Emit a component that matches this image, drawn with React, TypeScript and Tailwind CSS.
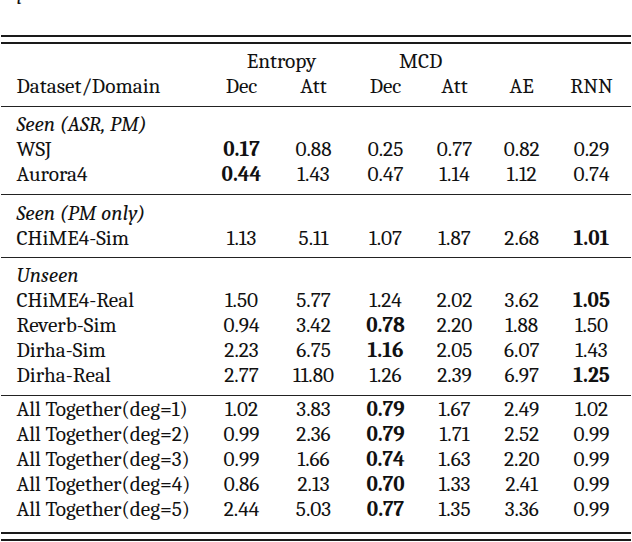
type Row = { name: string; vals: string[] };

const groups: { label?: string; rows: Row[] }[] = [
    {
        label: 'Seen (ASR, PM)',
        rows: [
            { name: 'WSJ', vals: ['*0.17', '0.88', '0.25', '0.77', '0.82', '0.29'] },
            { name: 'Aurora4', vals: ['*0.44', '1.43', '0.47', '1.14', '1.12', '0.74'] },
        ],
    },
    {
        label: 'Seen (PM only)',
        rows: [{ name: 'CHiME4-Sim', vals: ['1.13', '5.11', '1.07', '1.87', '2.68', '*1.01'] }],
    },
    {
        label: 'Unseen',
        rows: [
            { name: 'CHiME4-Real', vals: ['1.50', '5.77', '1.24', '2.02', '3.62', '*1.05'] },
            { name: 'Reverb-Sim', vals: ['0.94', '3.42', '*0.78', '2.20', '1.88', '1.50'] },
            { name: 'Dirha-Sim', vals: ['2.23', '6.75', '*1.16', '2.05', '6.07', '1.43'] },
            { name: 'Dirha-Real', vals: ['2.77', '11.80', '1.26', '2.39', '6.97', '*1.25'] },
        ],
    },
    {
        rows: [
            { name: 'All Together(deg=1)', vals: ['1.02', '3.83', '*0.79', '1.67', '2.49', '1.02'] },
            { name: 'All Together(deg=2)', vals: ['0.99', '2.36', '*0.79', '1.71', '2.52', '0.99'] },
            { name: 'All Together(deg=3)', vals: ['0.99', '1.66', '*0.74', '1.63', '2.20', '0.99'] },
            { name: 'All Together(deg=4)', vals: ['0.86', '2.13', '*0.70', '1.33', '2.41', '0.99'] },
            { name: 'All Together(deg=5)', vals: ['2.44', '5.03', '*0.77', '1.35', '3.36', '0.99'] },
        ],
    },
];

const groupGaps = ['mt-[4.5px]', 'mt-[5.5px]', 'mt-[4.8px]', 'mt-[0.8px]'];
const ruleGaps = ['mt-[7px]', 'mt-[6px]', 'mt-[6.7px]'];

function Line({ className }: { className: string }) {
    return <div className={`ml-px w-[630px] ${className}`} />;
}

function DataRow({ row }: { row: Row }) {
    return (
        <div className="grid grid-cols-[189px_72px_72px_72px_66px_68.5px_71px] pl-[16.5px] h-[25px] leading-[25px] whitespace-nowrap">
            <span>{row.name}</span>
            {row.vals.map((v, i) => (
                <span key={i} className={v.startsWith('*') ? 'text-center font-bold' : 'text-center'}>
                    {v.replace('*', '')}
                </span>
            ))}
        </div>
    );
}

export default function App() {
    return (
        <div className="w-[632px] h-[542px] overflow-hidden bg-white flex flex-col font-serif text-[21.3px] text-[#111]">
            {/* tail of the caption line above, cut off by the crop */}
            <div className="-mt-[20px] h-[25px] leading-[25px] pl-[17px] italic">p</div>

            <Line className="mt-[30px] h-[2px] bg-[#1a1a1a]" />
            <Line className="mt-[5px] h-[2px] bg-[#1a1a1a]" />

            <div className="grid grid-cols-[189px_72px_72px_72px_66px_68.5px_71px] pl-[16.5px] h-[25px] leading-[25px] mt-[5.3px]">
                <span />
                <span className="col-span-2 text-center pl-[8px]">Entropy</span>
                <span className="col-span-2 text-center pl-[4.5px]">MCD</span>
            </div>
            <div className="grid grid-cols-[189px_72px_72px_72px_66px_68.5px_71px] pl-[16.5px] h-[25px] leading-[25px]">
                <span>Dataset/Domain</span>
                <span className="text-center">Dec</span>
                <span className="text-center">Att</span>
                <span className="text-center">Dec</span>
                <span className="text-center">Att</span>
                <span className="text-center">AE</span>
                <span className="text-center">RNN</span>
            </div>
            <Line className="mt-[6.7px] h-[1.5px] bg-[#222]" />

            {groups.map((g, gi) => (
                <div key={gi} className="flex flex-col">
                    <div className={`flex flex-col ${groupGaps[gi]}`}>
                        {g.label && (
                            <div className="pl-[16.5px] h-[25px] leading-[25px] italic">{g.label}</div>
                        )}
                        {g.rows.map((r) => (
                            <DataRow key={r.name} row={r} />
                        ))}
                    </div>
                    {gi < ruleGaps.length && <Line className={`${ruleGaps[gi]} h-[1.5px] bg-[#222]`} />}
                </div>
            ))}

            <Line className="mt-[9.7px] h-[2px] bg-[#1a1a1a]" />
            <Line className="mt-[5px] h-[2px] bg-[#1a1a1a]" />
        </div>
    );
}
